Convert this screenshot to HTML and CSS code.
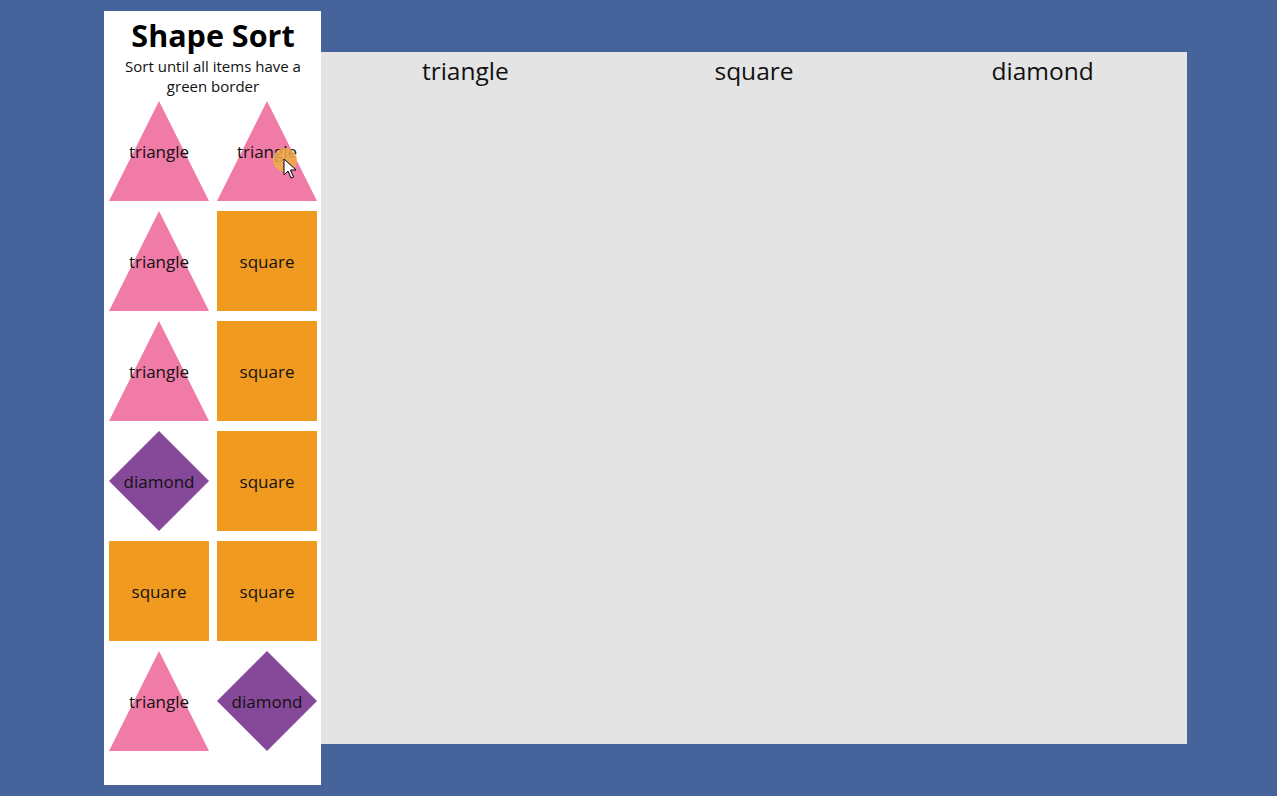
FILE: index.html
```html
<!DOCTYPE html>
<html>
<head>
<meta charset="utf-8">
<title>Shape Sort</title>
<link rel="stylesheet" href="styles.css">
</head>
<body>
<aside class="sidebar">
  <h1 class="title">Shape Sort</h1>
  <p class="subtitle">Sort until all items have a green border</p>
  <div class="items">
    <div class="item triangle"><span>triangle</span></div>
    <div class="item triangle"><span>triangle</span></div>
    <div class="item triangle"><span>triangle</span></div>
    <div class="item square"><span>square</span></div>
    <div class="item triangle"><span>triangle</span></div>
    <div class="item square"><span>square</span></div>
    <div class="item diamond"><span>diamond</span></div>
    <div class="item square"><span>square</span></div>
    <div class="item square"><span>square</span></div>
    <div class="item square"><span>square</span></div>
    <div class="item triangle"><span>triangle</span></div>
    <div class="item diamond"><span>diamond</span></div>
  </div>
  <div class="cursor">
    <div class="cursor-dot"></div>
    <svg class="cursor-arrow" width="14" height="22" viewBox="0 0 14 22">
      <path d="M1 1 L1 17 L5 13 L8 20 L10.5 19 L7.5 12 L13 12 Z" fill="#fff" stroke="#000" stroke-width="1" stroke-linejoin="round"/>
    </svg>
  </div>
</aside>
<main class="board">
  <div class="bin"><h2 class="bin-title">triangle</h2></div>
  <div class="bin"><h2 class="bin-title">square</h2></div>
  <div class="bin"><h2 class="bin-title">diamond</h2></div>
</main>
</body>
</html>
```
FILE: styles.css
```css
html, body {
  margin: 0;
  padding: 0;
}
body {
  width: 1277px;
  height: 796px;
  background: #47639b;
  font-family: "Open Sans", "Noto Sans", sans-serif;
  color: #111;
  display: flex;
  align-items: flex-start;
  overflow: hidden;
}
.sidebar {
  position: relative;
  width: 217px;
  height: 774px;
  margin: 11px 0 0 104px;
  background: #fff;
  box-sizing: border-box;
  padding: 0 4px 0 5px;
}
.title {
  margin: 0;
  padding-top: 6px;
  font-size: 30.5px;
  line-height: 36px;
  font-weight: 700;
  text-align: center;
  color: #000;
}
.subtitle {
  margin: 3px 0 0;
  padding: 0 8px;
  font-size: 15px;
  line-height: 20px;
  text-align: center;
  height: 45px;
}
.items {
  display: grid;
  grid-template-columns: 100px 100px;
  grid-auto-rows: 100px;
  column-gap: 8px;
  row-gap: 10px;
}
.item {
  position: relative;
  display: flex;
  align-items: center;
  justify-content: center;
  font-size: 17px;
  padding-top: 1px;
  box-sizing: border-box;
}
.item::before {
  content: "";
  position: absolute;
  inset: 0;
}
.item span {
  position: relative;
}
.triangle::before {
  background: #f07ba6;
  clip-path: polygon(50% 0, 100% 100%, 0 100%);
}
.square::before {
  background: #f09b20;
}
.diamond::before {
  background: #864899;
  clip-path: polygon(50% 0, 100% 50%, 50% 100%, 0 50%);
}
.cursor {
  position: absolute;
  left: 169px;
  top: 137px;
  width: 30px;
  height: 30px;
}
.cursor-dot {
  position: absolute;
  left: 0;
  top: 0;
  width: 24px;
  height: 24px;
  border-radius: 50%;
  background: rgba(240, 175, 70, 0.85);
}
.cursor-arrow {
  position: absolute;
  left: 10px;
  top: 10px;
}
.board {
  width: 866px;
  height: 692px;
  margin-top: 52px;
  background: #e4e4e4;
  display: grid;
  grid-template-columns: repeat(3, 1fr);
}
.bin-title {
  margin: 0;
  padding-top: 3px;
  font-size: 24.5px;
  line-height: 32px;
  font-weight: 400;
  text-align: center;
  color: #111;
}
```
